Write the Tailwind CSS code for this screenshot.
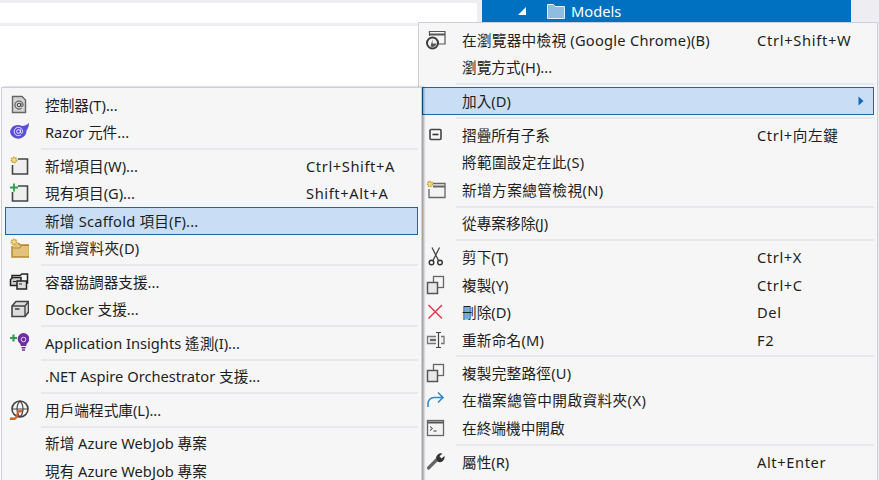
<!DOCTYPE html>
<html>
<head>
    <title>Solution Explorer context menu</title>
    <script src="https://cdn.jsdelivr.net/npm/@tailwindcss/browser@4"></script>
</head>
<body class="bg-white overflow-hidden">
<div class="relative w-[879px] h-[480px] overflow-hidden font-['Noto_Sans','Noto_Sans_CJK_TC',sans-serif] text-[14.67px] text-[#1e1e1e]">

    <!-- editor + solution explorer behind the menus -->
    <div class="flex h-[480px]">
        <div class="w-[477px]">
            <div class="h-[3px] bg-[#eeeef2]"></div>
            <div class="h-[20px] bg-white"></div>
            <div class="h-[3px] bg-[#eeeef2]"></div>
        </div>
        <div class="w-[5px] bg-[#eeeef2]"></div>
        <div class="w-[369px] h-[22px] bg-[#0070c0] flex items-center text-white">
            <svg class="ml-[35px] w-[10px] h-[10px]" viewBox="0 0 10 10"><path d="M9 1v8H1z" fill="#fff"/></svg>
            <svg class="ml-[19px] w-[20px] h-[18px]" viewBox="0 0 20 18"><path d="M1.500 2.500h6l1.500 2h9.500v12h-17z" fill="#8fbde2" stroke="#e3eef8"/></svg>
            <span class="ml-[5px]">Models</span>
        </div>
        <div class="flex-1 bg-[#eeeef2]"></div>
    </div>

    <!-- project menu -->
    <div class="absolute left-[418px] top-[22px] w-[460px] h-[470px] bg-[#f6f6f6] border border-[#cccedb] pt-[3px] pl-[3px] pr-[3px]">
        <div class="flex items-center h-[27.500px]">
            <span class="w-[40px] pl-[4px]">
                <svg class="w-[20px] h-[20px]" viewBox="0 0 20 20"><path d="M3.500 6V1.500h15.500v12.500H12" fill="none" stroke="#555" stroke-width="1.200"/><path d="M4 4.500h15" stroke="#555" stroke-width="2"/><circle cx="6.500" cy="13" r="5.500" fill="#f6f6f6" stroke="#3c3c3c" stroke-width="2"/><path d="M6.500 9.500v4h4a4 4 0 0 1-6 2.800z" fill="#555"/></svg>
            </span>
            <span class="w-[295px] tracking-[0.24px]">在瀏覽器中檢視 (Google Chrome)(B)</span><span class="tracking-[0.7px]">Ctrl+Shift+W</span>
        </div>
        <div class="flex items-center h-[27.500px]"><span class="w-[40px]"></span><span>瀏覽方式(H)...</span></div>
        <div class="h-[6px] flex items-center pl-[34px]"><div class="w-full h-[2px] bg-[#e7e8ec]"></div></div>
        <div class="flex items-center h-[28px] bg-[#c9def5] border border-[#0a6cbd]">
            <span class="w-[39px]"></span><span class="flex-1">加入(D)</span>
            <svg class="w-[6px] h-[10px] mr-[9px]" viewBox="0 0 6 10"><path d="M0.500 0.500L5.500 5L0.500 9.500z" fill="#0e6ab8"/></svg>
        </div>
        <div class="h-[6px] flex items-center pl-[34px]"><div class="w-full h-[2px] bg-[#e7e8ec]"></div></div>
        <div class="flex items-center h-[27.500px]">
            <span class="w-[40px] pl-[4px]">
                <svg class="w-[20px] h-[20px]" viewBox="0 0 20 20"><rect x="4" y="4.500" width="11" height="10" rx="1" fill="#f6f6f6" stroke="#444" stroke-width="1.600"/><path d="M6.500 9.500h6" stroke="#333" stroke-width="1.600"/></svg>
            </span>
            <span class="w-[295px]">摺疊所有子系</span><span class="tracking-[0.6px]">Ctrl+向左鍵</span>
        </div>
        <div class="flex items-center h-[27.500px]"><span class="w-[40px]"></span><span class="tracking-[0.3px]">將範圍設定在此(S)</span></div>
        <div class="flex items-center h-[27.500px]">
            <span class="w-[40px] pl-[4px]">
                <svg class="w-[20px] h-[20px]" viewBox="0 0 20 20"><path d="M7 3.500h12v14H3V9" fill="#f3f3f3" stroke="#666" stroke-width="1.300"/><path d="M7 6.500h12" stroke="#666" stroke-width="2"/><circle cx="4" cy="4" r="2.500" fill="#f2d98a" stroke="#c8a13a" stroke-width="1.500" stroke-dasharray="1.500 .7"/></svg>
            </span>
            <span class="tracking-[0.4px]">新增方案總管檢視(N)</span>
        </div>
        <div class="h-[6px] flex items-center pl-[34px]"><div class="w-full h-[2px] bg-[#e7e8ec]"></div></div>
        <div class="flex items-center h-[27.500px]"><span class="w-[40px]"></span><span>從專案移除(J)</span></div>
        <div class="h-[6.500px] flex items-center pl-[34px]"><div class="w-full h-[2px] bg-[#e7e8ec]"></div></div>
        <div class="flex items-center h-[27.500px]">
            <span class="w-[40px] pl-[4px]">
                <svg class="w-[20px] h-[20px]" viewBox="0 0 20 20"><path d="M6 0.500l6.500 13M13.500 0.500L7 13.500" fill="none" stroke="#444" stroke-width="1.300"/><circle cx="5.500" cy="15.500" r="2.300" fill="none" stroke="#333" stroke-width="1.400"/><circle cx="14" cy="15.500" r="2.300" fill="none" stroke="#333" stroke-width="1.400"/></svg>
            </span>
            <span class="w-[295px]">剪下(T)</span><span class="tracking-[0.6px]">Ctrl+X</span>
        </div>
        <div class="flex items-center h-[27.500px]">
            <span class="w-[40px] pl-[4px]">
                <svg class="w-[20px] h-[20px]" viewBox="0 0 20 20"><rect x="7.500" y="1.500" width="10" height="11" fill="#f6f6f6" stroke="#666" stroke-width="1.300"/><rect x="1.500" y="7.500" width="10" height="11" fill="#e8e8e8" stroke="#555" stroke-width="1.500"/></svg>
            </span>
            <span class="w-[295px]">複製(Y)</span><span class="tracking-[0.6px]">Ctrl+C</span>
        </div>
        <div class="flex items-center h-[27.500px]">
            <span class="w-[40px] pl-[4px]">
                <svg class="w-[20px] h-[20px]" viewBox="0 0 20 20"><path d="M2.500 3l13.500 13.500M16 3L2.500 16.500" stroke="#e5384f" stroke-width="1.500"/></svg>
            </span>
            <span class="w-[295px]">刪除(D)</span><span class="tracking-[0.6px]">Del</span>
        </div>
        <div class="flex items-center h-[27.500px]">
            <span class="w-[40px] pl-[4px]">
                <svg class="w-[20px] h-[20px]" viewBox="0 0 20 20"><path d="M10 6.500H1.500v7H10M15 6.500h3v7h-3" fill="#eee" stroke="#777" stroke-width="1.300"/><path d="M4 10h6" stroke="#666" stroke-width="2.200"/><path d="M10 2.500h2.500v15H10M15 2.500h-2.500M15 17.500h-2.500" fill="none" stroke="#444" stroke-width="1.200"/></svg>
            </span>
            <span class="w-[295px] tracking-[0.2px]">重新命名(M)</span><span class="tracking-[0.6px]">F2</span>
        </div>
        <div class="h-[5.500px] flex items-center pl-[34px]"><div class="w-full h-[2px] bg-[#e7e8ec]"></div></div>
        <div class="flex items-center h-[27.500px]">
            <span class="w-[40px] pl-[4px]">
                <svg class="w-[20px] h-[20px]" viewBox="0 0 20 20"><rect x="7.500" y="1.500" width="10" height="11" fill="#f6f6f6" stroke="#666" stroke-width="1.300"/><rect x="1.500" y="7.500" width="10" height="11" fill="#e8e8e8" stroke="#555" stroke-width="1.500"/></svg>
            </span>
            <span class="tracking-[0.2px]">複製完整路徑(U)</span>
        </div>
        <div class="flex items-center h-[27.500px]">
            <span class="w-[40px] pl-[4px]">
                <svg class="w-[20px] h-[20px]" viewBox="0 0 20 20"><path d="M2 17v-3.500a6 6 0 0 1 6-6h9M12 2.500l5 5-5 5" fill="none" stroke="#2f8ad4" stroke-width="1.600"/></svg>
            </span>
            <span class="tracking-[0.4px]">在檔案總管中開啟資料夾(X)</span>
        </div>
        <div class="flex items-center h-[27.500px]">
            <span class="w-[40px] pl-[4px]">
                <svg class="w-[20px] h-[20px]" viewBox="0 0 20 20"><rect x="1.500" y="2.500" width="16" height="15" fill="#f3f3f3" stroke="#666" stroke-width="1.300"/><path d="M2 4.500h15" stroke="#555" stroke-width="2"/><path d="M4 8.500l2.500 2L4 12.500M7.500 13h3" fill="none" stroke="#333"/></svg>
            </span>
            <span>在終端機中開啟</span>
        </div>
        <div class="h-[6.500px] flex items-center pl-[34px]"><div class="w-full h-[2px] bg-[#e7e8ec]"></div></div>
        <div class="flex items-center h-[27.500px]">
            <span class="w-[40px] pl-[4px]">
                <svg class="w-[20px] h-[20px]" viewBox="0 0 20 20"><path d="M2.500 16l8.500-8.500" stroke="#666" stroke-width="3.200" stroke-linecap="round"/><path d="M10 6a5 5 0 0 1 6.500-4.500l-3 2.700 2 2.300 3-2.500a5 5 0 0 1-6.800 5.700z" fill="#333"/></svg>
            </span>
            <span class="w-[295px]">屬性(R)</span><span class="tracking-[0.6px]">Alt+Enter</span>
        </div>
    </div>

    <!-- add submenu -->
    <div class="absolute left-[1px] top-[87px] w-[421px] h-[410px] bg-[#f6f6f6] border border-[#cccedb] pt-[3px] pl-[3px] pr-[3px] shadow-[2px_0_2px_rgba(0,0,0,0.35)]">
        <div class="flex items-center h-[27.500px]">
            <span class="w-[40px] pl-[4px]">
                <svg class="w-[20px] h-[20px]" viewBox="0 0 20 20"><path d="M3.500 1.500h9.500l3.500 3.500v12.500H3.500z" fill="#d4d4d4" stroke="#666" stroke-width="1.400"/><circle cx="10" cy="10" r="1.800" fill="none" stroke="#444"/><path d="M11.800 8v3a1.300 1.300 0 0 0 2.300-1a4.100 4.100 0 1 0-1.500 3.200" fill="none" stroke="#444"/></svg>
            </span>
            <span>控制器(T)...</span>
        </div>
        <div class="flex items-center h-[27.500px]">
            <span class="w-[40px] pl-[4px]">
                <svg class="w-[20px] h-[20px]" viewBox="0 0 20 20"><path d="M1 10a8 7.500 0 0 1 12-6c2.500 0 5-1 7-3c0 3-1 5.500-2.500 7.500a8.300 8 0 0 1-16.500 1.500z" fill="#5a4fd6"/><circle cx="9.500" cy="9.500" r="1.900" fill="none" stroke="#e8e6ff"/><path d="M11.400 7.500v3a1.200 1.200 0 0 0 2.200-1a4.200 4.200 0 1 0-1.500 3.200" fill="none" stroke="#e8e6ff"/></svg>
            </span>
            <span>Razor 元件...</span>
        </div>
        <div class="h-[6px] flex items-center pl-[36px]"><div class="w-full h-[2px] bg-[#e7e8ec]"></div></div>
        <div class="flex items-center h-[27.500px]">
            <span class="w-[40px] pl-[4px]">
                <svg class="w-[20px] h-[20px]" viewBox="0 0 20 20"><path d="M9 3h9.500v15h-15V9" fill="#efefef" stroke="#444" stroke-width="1.600"/><circle cx="5" cy="4" r="2.600" fill="#f2d98a" stroke="#c8a13a" stroke-width="1.600" stroke-dasharray="1.500 .7"/></svg>
            </span>
            <span class="w-[261px]">新增項目(W)...</span><span class="tracking-[0.6px]">Ctrl+Shift+A</span>
        </div>
        <div class="flex items-center h-[27.500px]">
            <span class="w-[40px] pl-[4px]">
                <svg class="w-[20px] h-[20px]" viewBox="0 0 20 20"><path d="M9 3h9.500v15h-15V9" fill="#efefef" stroke="#444" stroke-width="1.600"/><path d="M5 0.500v8M1 4.500h8" stroke="#2f9e4f" stroke-width="1.800"/></svg>
            </span>
            <span class="w-[261px]">現有項目(G)...</span><span class="tracking-[0.6px]">Shift+Alt+A</span>
        </div>
        <div class="flex items-center h-[27.500px] bg-[#c9def5] border border-[#0a6cbd]">
            <span class="w-[39px]"></span><span class="tracking-[0.2px]">新增 Scaffold 項目(F)...</span>
        </div>
        <div class="flex items-center h-[27.500px]">
            <span class="w-[40px] pl-[4px]">
                <svg class="w-[20px] h-[20px]" viewBox="0 0 20 20"><path d="M3 8v11h17.500V7h-9L9 5" fill="#e3c27c" stroke="#b58a30" stroke-width="1.500"/><path d="M3.500 10h7.500l1.500-2.500h7.500" fill="none" stroke="#b58a30"/><circle cx="5" cy="4" r="2.600" fill="#f2d98a" stroke="#c8a13a" stroke-width="1.600" stroke-dasharray="1.500 .7"/></svg>
            </span>
            <span class="tracking-[0.2px]">新增資料夾(D)</span>
        </div>
        <div class="h-[6px] flex items-center pl-[36px]"><div class="w-full h-[2px] bg-[#e7e8ec]"></div></div>
        <div class="flex items-center h-[27.500px]">
            <span class="w-[40px] pl-[4px]">
                <svg class="w-[20px] h-[20px]" viewBox="0 0 20 20"><path d="M3 7V3.500h8l2-1.500h5.500v9h-2" fill="none" stroke="#222" stroke-width="1.500"/><path d="M1.500 7.500l2.500-2h8v8H1.500z" fill="#ccc" stroke="#222" stroke-width="1.500"/><path d="M8 9h9.500v8H8z" fill="#ddd" stroke="#222" stroke-width="1.500"/><path d="M10 12h3M4 9.500h3" stroke="#222" stroke-width="1.200"/></svg>
            </span>
            <span>容器協調器支援...</span>
        </div>
        <div class="flex items-center h-[27.500px]">
            <span class="w-[40px] pl-[4px]">
                <svg class="w-[20px] h-[20px]" viewBox="0 0 20 20"><path d="M3 7l4-4.500h12.500V13L16 17.500H3z" fill="#ddd" stroke="#444" stroke-width="1.600"/><path d="M3 7h13v10.500M16 7l3.500-4.500" fill="none" stroke="#444" stroke-width="1.400"/><path d="M6 10h4.500" stroke="#444" stroke-width="1.600"/></svg>
            </span>
            <span>Docker 支援...</span>
        </div>
        <div class="h-[6px] flex items-center pl-[36px]"><div class="w-full h-[2px] bg-[#e7e8ec]"></div></div>
        <div class="flex items-center h-[27.500px]">
            <span class="w-[40px] pl-[4px]">
                <svg class="w-[20px] h-[20px]" viewBox="0 0 20 20"><path d="M11 10.500a5.800 5.800 0 1 1 7 0l-1 2.500h-5z" fill="#6f2da8"/><path d="M12.500 14.800h4M13 17h3" stroke="#6f2da8" stroke-width="1.500"/><circle cx="14.500" cy="6.500" r="2.300" fill="none" stroke="#e6d6ef"/><path d="M4.500 1.500v7M1 5h7" stroke="#2f9e4f" stroke-width="2.200"/></svg>
            </span>
            <span>Application Insights 遙測(I)...</span>
        </div>
        <div class="h-[6px] flex items-center pl-[36px]"><div class="w-full h-[2px] bg-[#e7e8ec]"></div></div>
        <div class="flex items-center h-[27.500px]"><span class="w-[40px]"></span><span>.NET Aspire Orchestrator 支援...</span></div>
        <div class="h-[6px] flex items-center pl-[36px]"><div class="w-full h-[2px] bg-[#e7e8ec]"></div></div>
        <div class="flex items-center h-[27.500px]">
            <span class="w-[40px] pl-[4px]">
                <svg class="w-[20px] h-[20px]" viewBox="0 0 20 20"><circle cx="11" cy="9" r="8" fill="none" stroke="#444" stroke-width="1.600"/><path d="M3 9h16M11 1c-4 4-4 12 0 16M11 1c4 4 4 12 0 16" fill="none" stroke="#444" stroke-width="1.200"/><path d="M1 17.500h4c2 0 2-1.500 2.500-4s1-3.500 3-3.500h3l-1 2.500h-2c-1 0-1 1-1.500 3s-1.500 4.500-4 4.500H1z" fill="#d4602a"/></svg>
            </span>
            <span>用戶端程式庫(L)...</span>
        </div>
        <div class="h-[6px] flex items-center pl-[36px]"><div class="w-full h-[2px] bg-[#e7e8ec]"></div></div>
        <div class="flex items-center h-[27.500px]"><span class="w-[40px]"></span><span>新增 Azure WebJob 專案</span></div>
        <div class="flex items-center h-[27.500px]"><span class="w-[40px]"></span><span>現有 Azure WebJob 專案</span></div>
    </div>
</div>
</body>
</html>
